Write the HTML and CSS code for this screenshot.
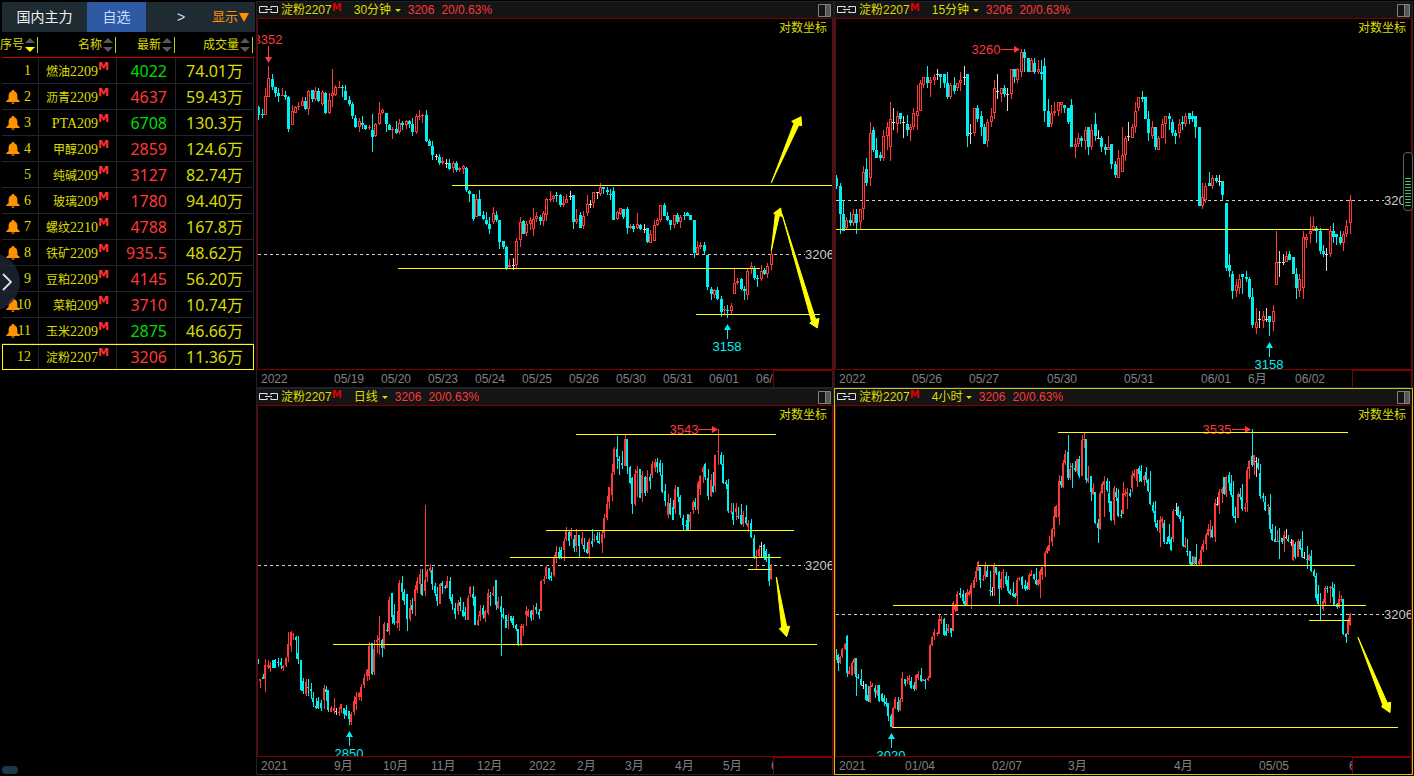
FILE: index.html
```html
<!DOCTYPE html>
<html lang="zh-CN">
<head>
<meta charset="utf-8">
<title>期货行情</title>
<link rel="stylesheet" href="styles.css">
</head>
<body>
<svg class="defs" aria-hidden="true">
  <symbol id="bell" viewBox="0 0 14 14"><path d="M7 0c.8 0 1.300.5 1.300 1.300C10.500 2 11.400 4 11.400 6v3l2.300 2v1H.300v-1l2.300-2V6c0-2 .900-4 3.100-4.700C5.700.5 6.200 0 7 0zM5.300 12.500h3.400c-.2.900-.8 1.400-1.700 1.400s-1.500-.5-1.700-1.400z" fill="#ff9200"/></symbol>
  <symbol id="sort" viewBox="0 0 13 16"><path d="M0 6h10L5 1z" fill="#585858"/><path d="M0 10h10l-5 5z" fill="#585858"/><path d="M12 0h1v16h-1z" fill="#c8c800"/></symbol>
  <symbol id="sort-down" viewBox="0 0 13 16"><path d="M0 6h10L5 1z" fill="#585858"/><path d="M0 10h10l-5 5z" fill="#ffff00"/><path d="M12 0h1v16h-1z" fill="#c8c800"/></symbol>
  <symbol id="link" viewBox="0 0 20 8"><path d="M8 .5H.5v6H8M8 0v2M8 5v2M12 .5h6.500v6H12M12 0v2M12 5v2M6 3.500h7" fill="none" stroke="#e0e0e0"/></symbol>
  <symbol id="split" viewBox="0 0 13 13"><path d="M7.500 1H12v11H7.500z" fill="#585858"/><path d="M.5.5h12v12H.5zM7.500 1v11" fill="none" stroke="#808080"/></symbol>
</svg>
<div class="app">
  <aside class="sidebar">
    <nav class="tabs">
      <button class="tab">国内主力</button>
      <button class="tab tab-active">自选</button>
      <button class="tab tab-more">&gt;</button>
      <div class="display"><select class="plain display-select" aria-label="显示"><option>显示</option></select><span class="display-caret"></span></div>
    </nav>
    <table class="quotes">
      <colgroup><col class="col-no"><col class="col-name"><col class="col-last"><col class="col-vol"></colgroup>
      <thead>
        <tr>
          <th><div class="th"><span>序号</span><svg class="sort"><use href="#sort-down"/></svg></div></th>
          <th><div class="th"><span>名称</span><svg class="sort"><use href="#sort"/></svg></div></th>
          <th><div class="th"><span>最新</span><svg class="sort"><use href="#sort"/></svg></div></th>
          <th><div class="th"><span>成交量</span><svg class="sort"><use href="#sort"/></svg></div></th>
        </tr>
      </thead>
      <tbody>
        <tr><td><div class="no"><b>1</b></div></td><td class="name">燃油<i>2209</i><sup>M</sup></td><td class="last down">4022</td><td class="vol">74.01万</td></tr>
        <tr><td><div class="no"><svg class="bell"><use href="#bell"/></svg><b>2</b></div></td><td class="name">沥青<i>2209</i><sup>M</sup></td><td class="last up">4637</td><td class="vol">59.43万</td></tr>
        <tr><td><div class="no"><svg class="bell"><use href="#bell"/></svg><b>3</b></div></td><td class="name"><i>PTA209</i><sup>M</sup></td><td class="last down">6708</td><td class="vol">130.3万</td></tr>
        <tr><td><div class="no"><svg class="bell"><use href="#bell"/></svg><b>4</b></div></td><td class="name">甲醇<i>209</i><sup>M</sup></td><td class="last up">2859</td><td class="vol">124.6万</td></tr>
        <tr><td><div class="no"><b>5</b></div></td><td class="name">纯碱<i>209</i><sup>M</sup></td><td class="last up">3127</td><td class="vol">82.74万</td></tr>
        <tr><td><div class="no"><svg class="bell"><use href="#bell"/></svg><b>6</b></div></td><td class="name">玻璃<i>209</i><sup>M</sup></td><td class="last up">1780</td><td class="vol">94.40万</td></tr>
        <tr><td><div class="no"><svg class="bell"><use href="#bell"/></svg><b>7</b></div></td><td class="name">螺纹<i>2210</i><sup>M</sup></td><td class="last up">4788</td><td class="vol">167.8万</td></tr>
        <tr><td><div class="no"><svg class="bell"><use href="#bell"/></svg><b>8</b></div></td><td class="name">铁矿<i>2209</i><sup>M</sup></td><td class="last up">935.5</td><td class="vol">48.62万</td></tr>
        <tr><td><div class="no"><b>9</b></div></td><td class="name">豆粕<i>2209</i><sup>M</sup></td><td class="last up">4145</td><td class="vol">56.20万</td></tr>
        <tr><td><div class="no"><svg class="bell"><use href="#bell"/></svg><b>10</b></div></td><td class="name">菜粕<i>209</i><sup>M</sup></td><td class="last up">3710</td><td class="vol">10.74万</td></tr>
        <tr><td><div class="no"><svg class="bell"><use href="#bell"/></svg><b>11</b></div></td><td class="name">玉米<i>2209</i><sup>M</sup></td><td class="last down">2875</td><td class="vol">46.66万</td></tr>
        <tr class="selected"><td><div class="no"><b>12</b></div></td><td class="name">淀粉<i>2207</i><sup>M</sup></td><td class="last up">3206</td><td class="vol">11.36万</td></tr>
      </tbody>
    </table>
    <button class="drawer" aria-label="展开"><svg class="drawer-icon" viewBox="0 0 10 18"><path d="M1 1l8 8-8 8" fill="none" stroke="#d8e4ee" stroke-width="1.800"/></svg></button>
    <span class="grip"></span>
  </aside>
  <main class="charts">
    <section class="panel" data-chart="m30">
      <header class="bar"><svg class="link"><use href="#link"/></svg><span class="contract">淀粉2207</span><sup class="main-mark">M</sup>
        <select class="plain period" aria-label="周期"><option>30分钟</option></select><span class="caret"></span><span class="quote">3206</span><span class="quote">20/0.63%</span><button class="split" aria-label="分栏"><svg class="split-icon"><use href="#split"/></svg></button></header>
      <svg class="plot"></svg>
      <footer class="axis"><svg class="ticks"></svg><span class="axis-box"></span></footer>
    </section>
    <section class="panel" data-chart="m15">
      <header class="bar"><svg class="link"><use href="#link"/></svg><span class="contract">淀粉2207</span><sup class="main-mark">M</sup>
        <select class="plain period" aria-label="周期"><option>15分钟</option></select><span class="caret"></span><span class="quote">3206</span><span class="quote">20/0.63%</span><button class="split" aria-label="分栏"><svg class="split-icon"><use href="#split"/></svg></button></header>
      <svg class="plot"></svg>
      <footer class="axis"><svg class="ticks"></svg><span class="axis-box"></span></footer>
    </section>
    <section class="panel" data-chart="day">
      <header class="bar"><svg class="link"><use href="#link"/></svg><span class="contract">淀粉2207</span><sup class="main-mark">M</sup>
        <select class="plain period" aria-label="周期"><option>日线</option></select><span class="caret"></span><span class="quote">3206</span><span class="quote">20/0.63%</span><button class="split" aria-label="分栏"><svg class="split-icon"><use href="#split"/></svg></button></header>
      <svg class="plot"></svg>
      <footer class="axis"><svg class="ticks"></svg><span class="axis-box"></span></footer>
    </section>
    <section class="panel panel-active" data-chart="h4">
      <header class="bar"><svg class="link"><use href="#link"/></svg><span class="contract">淀粉2207</span><sup class="main-mark">M</sup>
        <select class="plain period" aria-label="周期"><option>4小时</option></select><span class="caret"></span><span class="quote">3206</span><span class="quote">20/0.63%</span><button class="split" aria-label="分栏"><svg class="split-icon"><use href="#split"/></svg></button></header>
      <svg class="plot"></svg>
      <footer class="axis"><svg class="ticks"></svg><span class="axis-box"></span></footer>
    </section>
  </main>
  <div class="slider"><span class="slider-bars"></span></div>
</div>
<script src="charts.js"></script>
</body>
</html>
```

FILE: styles.css
```css
* { box-sizing: border-box; }

body {
  margin: 0;
  background: #000;
  color: #dcdc00;
  font: 12px/16px "Liberation Sans", "Noto Sans CJK SC", sans-serif;
}

button, .plain {
  margin: 0;
  padding: 0;
  border: 0;
  background: transparent;
  color: inherit;
  font: inherit;
}

.plain { appearance: none; outline: 0; }

.defs { position: absolute; width: 0; height: 0; }

.app {
  position: relative;
  display: flex;
  height: 100vh;
  overflow: hidden;
}

/* Watch list */
.sidebar {
  position: relative;
  flex: 0 0 256px;
  padding: 2px 1px 0 2px;
  overflow: hidden;
}

.tabs {
  display: flex;
  height: 30px;
  background: #1f2b33;
  color: #f0f0f0;
  font-size: 14px;
}

.tab { flex: 0 0 85px; }
.tab-active { flex-basis: 59px; background: #2f5aa3; color: #c4dcff; }
.tab-more { flex-basis: 66px; padding-left: 4px; color: #c4dcff; }

.display {
  display: flex;
  align-items: center;
  gap: 1px;
  color: #ff9200;
  font-size: 13px;
}

.display-select { width: 26px; }

.display-caret {
  border: 5px solid transparent;
  border-top: 9px solid #ff9200;
  border-bottom: 0;
}

.quotes {
  table-layout: fixed;
  width: 252px;
  border-spacing: 0;
}

.col-no { width: 37px; }
.col-name { width: 78px; }
.col-last { width: 59px; }
.col-vol { width: 78px; }

.quotes th {
  height: 26px;
  padding: 0;
  border-bottom: 1px solid #c80000;
  font-weight: normal;
}

.th {
  display: flex;
  align-items: center;
  justify-content: flex-end;
  gap: 1px;
  padding-right: 1px;
  white-space: nowrap;
}

.sort { flex: none; width: 13px; height: 16px; }

.quotes td {
  height: 26px;
  padding: 0;
  border-right: 1px solid #22242e;
  border-bottom: 1px solid #22242e;
  text-align: right;
  white-space: nowrap;
}

.no {
  display: grid;
  align-items: center;
  padding: 0 7px 0 4px;
}

.no b, .name i {
  font: 14px/16px "Liberation Serif", serif;
}

.no b { grid-area: 1 / 1; justify-self: end; }
.bell { grid-area: 1 / 1; width: 14px; height: 14px; }

.quotes .name { padding-right: 7px; }

.name sup {
  color: #ff3232;
  font: bold 11px/10px "DejaVu Sans", sans-serif;
  vertical-align: 6px;
}

.last, .vol { font: 16px/18px "Noto Sans", "Noto Sans CJK SC", sans-serif; }
.quotes .last { padding-right: 8px; }
.quotes .vol { padding-right: 10px; }
.up { color: #ff3838; }
.down { color: #00dc00; }

.selected { outline: 1px solid #ffff00; outline-offset: -1px; }

.drawer {
  position: absolute;
  top: 253px;
  left: -38px;
  width: 58px;
  height: 58px;
  padding-left: 40px;
  border-radius: 50%;
  background: rgba(30, 38, 52, 0.8);
}

.drawer-icon { display: block; width: 10px; height: 18px; }

.grip {
  position: absolute;
  bottom: 2px;
  left: 2px;
  width: 16px;
  height: 8px;
  border-radius: 4px;
  background: #1c3848;
}

/* Chart grid */
.charts {
  flex: 1;
  display: grid;
  grid-template-columns: 578fr 579fr;
  grid-template-rows: 1fr 1fr;
  padding: 1px 1px 1px 0;
}

.panel {
  display: flex;
  flex-direction: column;
  min-width: 0;
  min-height: 0;
  border: 1px solid #1e202b;
}

.panel-active { border-color: #c8c800; }

.bar {
  display: flex;
  flex: 0 0 16px;
  align-items: center;
  padding: 0 2px;
  background: #141414;
  white-space: nowrap;
}

.link { width: 20px; height: 8px; margin-right: 2px; }

.main-mark {
  width: 22px;
  padding-bottom: 4px;
  color: #d80000;
  font: bold 10px/10px "DejaVu Sans", sans-serif;
}

.caret {
  margin: 0 7px 0 3px;
  border: 3px solid transparent;
  border-top-color: #dcdc00;
  border-bottom: 0;
}

.quote { margin-right: 7px; color: #ff3838; }

.split { margin-left: auto; }
.split-icon { display: block; width: 13px; height: 13px; }

.plot {
  flex: 1;
  display: block;
  width: 100%;
  min-height: 0;
  border: 1px solid #800000;
  overflow: hidden;
}

.axis { display: flex; flex: 0 0 17px; }
.ticks { flex: 1; min-width: 0; height: 17px; overflow: hidden; }

.axis-box {
  flex: 0 0 60px;
  border: 1px solid #800000;
  border-bottom: 0;
}

.tick { fill: #808080; }
.scale { fill: #dcdc00; text-anchor: end; }
.price { fill: #c8c8c8; font-size: 13px; }
.high { fill: #ff3838; font-size: 13px; text-anchor: middle; }
.low { fill: #00f0f0; font-size: 13px; text-anchor: middle; }
.high-line { stroke: #ff3838; }
.low-line { stroke: #00f0f0; }
.current { stroke: #d0d0d0; stroke-dasharray: 3 3; }
.guide { stroke: #ffff00; }
.arrow { fill: #ffff00; stroke: #ffff00; stroke-width: 1px; stroke-linejoin: round; }
.r { fill: #ff3838; }
.c { fill: #00f0f0; }
.w { fill: #d8d8d8; }
.hollow { fill: #000; }

.slider {
  position: absolute;
  top: 152px;
  right: 1px;
  display: flex;
  align-items: flex-end;
  width: 10px;
  height: 59px;
  padding: 2px 1px;
  border: 1px solid #606060;
  border-radius: 4px;
  background: #000;
}

.slider-bars {
  flex: 1;
  height: 30px;
  background: repeating-linear-gradient(#3cc850 0 1px, #000 1px 3px);
}
```

FILE: charts.js
```js
// Candle rows: colour, high, body top, body bottom, low, in thirds of a pixel.
// Rows of an evenly stepped series have no x; dense series start with x.
const charts = {
  m30: {
    origin: [258, 19], size: [574, 350], hollow: true,
    series: [{ at: [256, 0], x0: 8, step: 10.052, rows: `
c318,320,345,360 c327,342,345,354 r264,288,345,345 r198,234,290,290 c222,237,261,270 c261,261,279,291 c264,279,287,306 r264,284,287,287 c273,285,291,300 c288,290,387,396
r315,332,375,375 r318,321,338,338 r306,317,320,330 r291,303,317,319 c291,303,327,330 r270,273,328,345 c270,270,297,306 r261,273,297,303 c264,273,303,306 r270,276,312,318
c276,279,339,342 r279,300,339,342 r207,279,288,321 r255,261,285,288 r243,261,263,264 c255,261,263,291 c255,273,300,300 c288,300,312,318 c306,312,348,357 c345,354,381,384
r354,363,381,396 c348,369,375,387 c375,375,387,390 r375,381,384,390 c342,390,411,456 r369,372,408,411 r306,339,372,375 r327,330,339,342 c339,339,372,396 c372,375,390,390
r381,387,390,417 c363,387,399,402 r357,369,396,402 c363,369,375,390 r360,363,375,387 c360,363,372,384 c354,372,396,408 r342,348,396,402 r330,348,352,360 r342,345,348,369
c330,345,423,426 c417,423,438,438 c423,438,465,480 w462,469,472,480 c462,471,489,495 r471,483,489,495 w477,489,492,504 c477,489,507,510 r483,489,504,519 c483,489,510,516
r501,504,510,516 r495,497,507,522 c501,504,570,576 c570,573,582,606 c582,582,657,663 r582,597,650,650 c570,597,647,648 c633,645,657,660 c636,660,672,675 c651,672,687,702
r621,639,666,672 c633,645,660,666 c660,660,726,747 c723,723,741,747 c738,741,804,810 r777,795,801,804 w774,795,798,810 r714,723,795,804 r651,666,720,741 c660,663,702,702
r663,672,699,708 r651,660,672,690 r624,657,687,708 r636,648,657,666 c645,651,663,675 r633,639,663,678 r594,597,645,663 r573,597,599,606 r585,588,597,606 c576,585,588,606
c582,585,615,620 r588,609,615,621 r582,597,608,609 w573,588,590,600 c585,585,666,687 r627,657,666,672 c636,645,684,684 r633,647,678,687 r585,612,638,648 w600,612,615,624
r576,577,609,624 w576,577,579,597 r549,561,582,588 c561,561,567,582 c561,570,576,585 c567,582,585,600 c561,573,660,660 r633,636,657,660 r624,625,641,645 c627,627,651,657
c621,627,684,702 r672,678,684,687 c672,678,687,696 r639,672,684,687 c672,675,686,690 w672,687,690,699 c684,684,726,729 r690,702,728,729 r660,675,723,723 r654,660,675,678
r615,615,660,666 c609,615,648,648 c636,648,660,663 c660,660,675,690 r645,645,675,684 c639,645,666,672 r645,651,666,684 c636,645,648,660 c636,639,648,648 c645,645,660,660
c660,660,759,774 r723,741,762,762 r726,735,741,747 c726,735,753,762 c765,765,861,870 c861,867,882,900 r867,870,885,894 c861,870,897,900 c888,897,936,951 r918,927,930,945
c915,930,933,954 r909,918,933,945 r807,849,882,882 r834,843,849,855 c834,837,867,870 c858,867,873,900 r807,813,885,900 r786,798,807,822 c798,804,834,840 c825,834,837,861
r795,813,837,843 c804,810,822,825 r789,798,822,834 r753,762,795,810` }],
    guides: [[452, 832, 185], [398, 760, 268], [696, 820, 314]],
    current: [254, 805],
    high: { text: "3352", x: 268, y: 44, line: [268, 46, 268, 58], head: [265, 57, 272, 57, 268.5, 63] },
    low: { text: "3158", x: 727, y: 351, arrow: [727, 324] },
    arrows: [
      [[540, 0], [694, 548, 762, 370, 755, 364, 783, 350, 785, 377, 776, 376]],
      [[540, 190], [694, 182, 706, 73, 701, 70, 722, 54, 726, 79, 718, 77]],
      [[540, 190], [726, 72, 815, 396, 809, 399, 832, 414, 837, 385, 827, 388]]
    ],
    ticks: [[261, "2022"], [334, "05/19"], [381, "05/20"], [428, "05/23"], [475, "05/24"], [522, "05/25"], [569, "05/26"], [616, "05/30"], [663, "05/31"], [709, "06/01"], [756, "06/02"]]
  },
  m15: {
    origin: [836, 19], size: [575, 350], hollow: true,
    series: [{ at: [834, 0], x0: 8, step: 10.072, rows: `
c525,534,558,567 c549,558,642,702 c600,642,693,693 r651,660,684,690 c636,660,669,678 r627,642,669,678 c627,642,669,702 r627,628,667,690 r498,516,627,660 c474,507,549,558
r366,399,534,558 c381,390,450,456 c414,450,474,474 c456,465,474,483 r390,408,474,483 r366,381,408,450 r306,357,441,483 w324,366,368,390 r333,348,372,399 c339,339,357,372
w348,366,369,414 c345,372,390,408 r372,381,390,423 r324,339,381,390 r255,333,348,390 r240,249,333,333 r231,231,255,264 c198,231,249,264 r231,240,249,291 r222,231,239,255
w207,222,225,240 c222,222,231,264 c222,222,249,264 c216,249,291,297 r249,255,291,297 c231,255,273,282 r249,249,264,273 r216,240,249,273 w198,231,234,255 c222,222,408,441
w372,399,402,432 r324,324,400,408 c315,324,357,366 c333,348,381,408 c372,381,432,432 r357,366,423,441 r324,348,366,381 r240,264,340,357 w222,273,276,297 r264,265,282,306
c255,264,282,291 w264,282,285,333 r207,207,282,297 c207,207,231,249 r204,207,240,249 r147,156,216,231 c147,156,174,216 c174,174,216,216 r174,180,216,216 c174,189,216,222
r180,207,216,222 c180,216,222,240 c174,198,333,366 c297,333,381,381 r315,339,372,381 r306,333,339,348 r306,306,333,348 r306,307,315,339 c315,315,324,339 c324,324,366,372
c297,315,441,441 r414,432,441,474 r399,414,432,441 c408,414,423,441 r381,390,423,450 c381,381,441,465 r372,390,441,450 c339,372,408,423 w390,414,417,417 c408,414,441,456
c432,441,450,465 r408,441,450,450 c432,432,492,507 c483,492,525,534 r450,474,534,534 r381,465,516,516 r408,414,465,483 w366,408,411,423 r372,381,414,414 r306,333,381,399
r291,291,324,333 c273,291,297,306 c291,291,357,357 c333,357,399,423 r363,381,408,417 c381,381,441,450 r408,414,450,450 r357,372,414,414 r348,348,372,432 c339,348,357,390
c357,366,399,408 c390,399,408,432 r357,372,399,414 c348,366,372,390 r339,348,372,381 c339,339,357,372 c333,348,357,366 c348,348,381,414 c381,381,618,618 r549,591,618,627
r549,558,600,609 c516,549,558,558 r525,534,558,567 c525,534,543,549 w525,543,546,558 c543,543,585,600 c609,609,804,813 c762,795,813,831 c813,822,873,897 r837,855,873,891
r822,837,864,882 c822,822,831,882 c813,831,837,846 c831,837,891,897 c864,891,975,984 r924,966,984,1002 w933,957,960,984 r933,948,963,984 w924,957,960,966 c948,948,966,1008
r915,933,966,993 r693,786,855,855 w753,786,789,831 w762,786,789,795 r753,768,786,786 c753,762,780,780 c771,771,822,822 c804,822,864,897 r822,837,873,891 r693,711,864,897
r702,711,720,744 r651,693,702,729 r651,678,693,693 c678,684,693,729 c684,693,753,762 c735,753,762,771 w744,762,765,813 r678,693,762,771 c669,693,711,729 c702,702,711,735
c693,711,729,735 r693,702,729,753 r660,678,702,711 r585,600,669,702` }],
    guides: [[836, 1329, 229]],
    current: [200, 1384],
    high: { text: "3260", x: 986, y: 54, line: [1001, 49, 1015, 49], head: [1014, 46, 1014, 53, 1020, 49.5] },
    low: { text: "3158", x: 1269, y: 369, arrow: [1269, 342] },
    arrows: [],
    ticks: [[839, "2022"], [912, "05/26"], [969, "05/27"], [1047, "05/30"], [1124, "05/31"], [1201, "06/01"], [1248, "6月"], [1295, "06/02"]]
  },
  day: {
    origin: [258, 406], size: [574, 350],
    series: [{ at: [256, 386], rows: `
7c819,819,833,833 13r879,879,884,906 21c864,873,879,879 28r819,836,879,918 37r822,836,842,850 43r828,838,845,858 52c822,822,846,846 58c819,822,846,846 67c816,827,832,844 75c816,828,838,849
82r836,840,846,855 90r813,816,837,843 97r738,774,813,828 105r735,738,780,798 112r741,743,746,762 120c750,753,762,819 127c750,801,819,834 135c822,822,912,915 142c876,885,915,924 150r879,888,924,930
157c879,903,906,930 165c891,909,915,939 172c918,936,948,963 180c936,960,966,969 187c933,945,966,969 195c942,950,966,975 204r897,906,942,969 211c900,909,918,945 218c912,912,972,978 226r960,966,978,978
235r936,966,975,984 241w966,975,978,987 250r963,978,981,990 256r954,954,970,981 265c966,966,984,999 271c957,972,987,990 279c975,975,1000,1017 286r978,984,1008,1017 294r930,945,978,987 300r918,933,954,972
309r918,921,933,942 315r894,903,933,945 324r864,876,897,906 333r849,852,870,885 340r768,780,870,882 348c771,771,864,867 355r762,789,858,867 363r747,762,768,801 370r690,756,762,807 379c759,762,786,813
385r708,714,786,789 393c711,732,735,738 400r633,642,735,747 408c621,621,693,714 415c654,687,711,717 424r675,705,711,726 430r582,591,711,735 438c570,591,618,642 444c609,618,645,657 453c624,624,699,735
462r642,666,699,705 468c636,657,672,684 477r597,609,645,690 483r573,585,612,621 492r549,564,594,624 499c549,594,627,630 508r357,582,615,630 514r549,555,573,588 523r534,546,555,561 529c543,552,594,612
537c591,600,621,630 543c603,624,645,660 552r591,594,654,654 559c585,591,600,624 568c597,603,606,609 574r570,585,606,606 582c573,585,639,645 590c624,633,654,672 598c651,666,684,699 606r642,651,675,687
612c633,648,660,675 621c648,672,690,693 628c663,678,690,702 636r627,636,702,702 643r600,603,624,633 652c600,624,636,660 657c630,633,717,717 667r687,702,717,720 673r657,675,690,705 681c657,666,687,699
688r672,675,696,708 696r609,621,681,687 703c618,630,633,660 711r600,621,627,630 720c582,582,657,672 727r633,645,666,669 736c630,660,678,810 742c666,684,693,699 751c687,687,726,726 757r684,702,705,729
766c690,690,705,711 772c690,696,717,726 781c714,717,729,735 787c729,729,775,780 795r714,720,775,780 802r714,720,726,750 811r660,675,687,720 817r669,675,690,693 826c672,675,696,705 832r657,672,687,702
841c651,663,672,684 850c669,678,687,699 856r582,585,675,675` }, { at: [540, 386], rows: `
12r570,579,585,594 19r537,543,570,579 27c546,546,579,582 34c558,570,576,585 43r507,516,567,573 50r480,498,516,531 58c483,498,516,519 65c483,492,516,519 73r456,465,492,525 79r423,432,459,465
88c435,438,465,480 94r426,438,450,459 102c447,459,486,498 109r429,447,480,498 117c447,447,480,516 127r438,456,474,480 133c456,477,489,498 141c468,489,501,504 149r456,462,501,519 157c429,465,474,483
163r444,459,462,468 172c438,450,462,471 178c438,465,471,474 187r435,444,471,501 192r384,396,441,456 201r330,354,396,402 207r303,303,348,369 216r234,261,326,345 222r183,189,258,267 231c150,189,213,249
238c210,219,225,267 247c195,231,237,249 255r147,159,240,240 261c159,159,240,264 270c240,243,291,294 277c273,276,354,384 286r249,264,354,360 292r240,255,261,333 300c249,249,336,336 307r255,267,321,348
315c270,273,321,330 321r252,273,315,321 331c264,273,285,309 337r225,234,267,276 346r219,228,246,258 351c216,228,243,261 360c222,231,258,270 366c231,267,318,321 375c294,315,345,360 385r324,348,387,396
390c336,351,384,387 399c342,363,402,402 406r297,309,369,384 414c303,303,333,348 420c327,333,387,396 430c387,396,417,432 438c402,417,420,432 445c384,384,432,432 451r378,387,408,432 460r342,348,372,384
466c336,348,363,372 475r285,291,371,384 481r267,270,309,327 489r240,246,258,291 495c231,234,273,282 504c249,276,330,342 513r264,282,330,333 520c258,300,318,321 527r207,207,300,318 535r129,195,198,237
543c198,207,234,237 550c207,234,291,294 558c282,288,294,309 565c279,294,375,381 574r351,375,378,384 580c351,378,402,417 589r351,366,378,402 595c363,390,393,399 603c354,387,414,417 610r375,387,414,423
619c357,393,411,417 625r402,411,423,438 633c399,411,453,456 642c447,456,513,519 649r492,510,516,549 657r477,489,510,516 664w468,480,483,513 672c474,477,513,522 679c489,495,522,528 687c504,504,585,600
694r534,540,579,582` }],
    guides: [[576, 776, 434], [546, 794, 530], [510, 781, 557], [748, 771, 569], [333, 817, 644]],
    current: [565, 805],
    high: { text: "3543", x: 684, y: 434, line: [698, 429, 713, 429], head: [712, 426, 712, 433, 718, 429.5] },
    low: { text: "2850", x: 349, y: 758, arrow: [349, 731] },
    arrows: [[[540, 386], [709, 573, 725, 724, 718, 728, 740, 752, 749, 721, 740, 721]]],
    ticks: [[261, "2021"], [334, "9月"], [383, "10月"], [431, "11月"], [477, "12月"], [529, "2022"], [577, "2月"], [625, "3月"], [675, "4月"], [723, "5月"], [771, "6月"]]
  },
  h4: {
    origin: [836, 406], size: [575, 350],
    series: [{ at: [834, 386], rows: `
7c789,804,822,822 13c804,807,831,855 19r810,813,831,834 26r786,789,810,816 33r771,774,789,792 40c747,750,861,873 46r840,855,864,864 54r825,831,866,870 60r816,819,831,864 67c816,816,873,930
73c864,873,876,879 82c849,879,897,900 88w885,897,900,909 96c894,894,942,945 102c900,927,945,948 108r885,900,948,951 115r891,897,903,903 123c897,906,918,936 130r897,912,924,930 136c897,897,945,948
145c921,924,945,948 151c927,936,948,960 157c936,948,954,963 162c951,951,990,1005 171c984,990,1023,1023 177r963,966,1023,1023 184r933,939,966,969 193c933,948,972,978 199r936,942,972,975 205r858,876,939,948
214c879,879,894,900 220r870,882,885,894 226r867,876,882,897 232c873,885,906,909 241c888,897,909,915 247r864,867,909,912 253r855,864,876,882 262c846,867,885,888 268r879,879,885,885 274c879,882,885,909
282r870,876,882,885 289r774,777,876,876 295r750,753,777,780 301r729,738,750,762 309r738,741,744,750 315r687,699,744,744 322r690,699,705,714 331c696,699,747,750 337c714,735,747,750 343r714,726,735,741
351c726,726,741,753 357r645,651,735,735 364r654,657,672,678 370r615,624,675,675 379c606,621,627,636 388c612,624,645,654 393c621,645,657,657 400r609,618,657,657 406r612,618,627,630 412r591,597,624,669
421r573,582,606,606 427r543,555,576,588 432r525,528,555,555 438c543,543,582,606 447r567,579,582,585 454r528,540,570,579 460c540,555,573,573 469c555,612,615,630 475w603,615,618,630 481r531,540,606,630
486c543,543,561,567 495c555,558,609,654 502r558,579,606,612 508r549,558,561,606 516c558,570,594,600 523c570,582,615,621 529c609,615,624,627 538c588,621,630,633 544c621,624,633,636 550r576,582,630,657
556r573,576,579,585 565c570,573,597,609 573c582,597,609,615 579c588,600,609,612 586r561,567,609,612 592r552,564,570,570 600c564,564,579,582 607c546,582,594,597 613r579,582,597,600 619r549,555,594,636
625r543,543,567,582 633r495,501,543,573 640r480,486,501,504 646r450,477,495,495 655r426,429,468,480 661r363,390,429,453 667r357,360,393,396 675r267,285,393,417 682c270,285,297,306 688r222,231,303,306
694r192,204,231,237 702c147,198,276,282 709r231,249,276,282 715c231,240,243,306 724c225,246,252,258 730r219,219,255,264 736c210,219,270,276 745r147,162,270,270 751r141,159,162,186 756c159,159,282,291
763r240,276,285,291 771c270,270,318,345 778r291,306,324,327 783c318,318,411,414 792c399,411,426,471 799r315,321,429,432 805r288,294,321,324 811r270,285,297,393 820c276,285,312,318 826c285,321,351,378
832c345,345,402,405 841r300,306,402,417 846c306,318,333,345 853c309,336,390,393` }, { at: [1120, 386], rows: `
3c372,387,390,396 10r288,321,384,384 16r309,321,327,333 22r306,318,324,369 30c309,321,330,333 37r255,267,306,318 43r249,261,270,276 52r249,249,285,303 58c240,246,264,288 64c237,255,285,288
73r267,270,282,300 79c243,258,282,291 84c279,282,315,318 91c255,318,354,357 99c348,357,375,381 106c345,375,408,423 112c402,411,426,435 121r390,402,441,483 127r393,399,408,426 133c402,411,468,474
141c453,468,474,474 148c414,450,468,474 154c453,459,492,495 160r369,375,459,468 169w351,372,375,387 174c360,363,390,393 181c375,387,399,408 190c390,399,480,483 196r453,477,483,486 202c459,495,498,510
211c495,495,534,537 217c510,528,537,537 223r510,513,534,537 229c474,513,534,537 237r519,525,534,537 243r480,492,531,537 250r462,474,492,498 259r441,447,474,492 265r414,429,447,450 271r402,429,435,456
277c420,432,453,456 285r339,351,453,468 292w333,354,357,360 298r309,318,357,384 307r303,309,321,351 313c273,273,324,327 319r270,273,324,333 328c258,267,291,315 334c267,291,327,333 339c285,327,390,396
346c363,390,396,411 354r318,324,396,396 361c306,324,333,342 367c294,333,369,375 376r351,363,369,378 382r243,252,351,378 388r222,225,249,279 397c129,210,237,243 403r207,207,237,267 409w213,225,228,273
415c216,231,246,252 422c234,261,330,339 430c321,330,336,348 436c330,348,372,375 445r354,357,360,387 451c324,363,429,441 457c414,429,462,465 466c420,459,468,468 472r432,465,468,468 478c426,465,468,519
487c456,456,468,474 493r435,447,465,498 499w429,453,456,459 505c447,459,465,468 514w459,468,471,480 520r462,462,522,525 526c468,474,513,519 535r459,465,513,513 541c459,465,489,492 547c435,486,513,516
553w498,513,516,519 562c480,519,522,549 568r504,507,522,525 573c492,510,555,558 583c549,555,570,573 589c561,570,636,645 595c597,624,654,657 601c621,657,660,702 610r639,645,669,675 616r600,606,651,657
622c600,606,609,621 631r600,603,606,651 637c588,603,606,633 643c594,606,657,657 652c651,654,663,669 658r615,639,663,666 664r627,639,642,648 669c639,639,744,747 678c741,744,753,771 685r696,705,744,747
691r681,684,717,720` }],
    guides: [[1058, 1348, 432], [978, 1355, 565], [893, 1366, 605], [1309, 1350, 620], [892, 1398, 727]],
    current: [614, 1384],
    high: { text: "3535", x: 1217, y: 434, line: [1232, 429, 1246, 429], head: [1245, 426, 1245, 433, 1251, 429.5] },
    low: { text: "3020", x: 891, y: 760, arrow: [891, 733] },
    arrows: [[[1120, 386], [714, 754, 788, 956, 785, 962, 810, 980, 812, 949, 802, 951]]],
    ticks: [[839, "2021"], [905, "01/04"], [992, "02/07"], [1068, "3月"], [1174, "4月"], [1259, "05/05"], [1349, "6月"]]
  }
};

function draw(panel) {
  const chart = charts[panel.dataset.chart];
  const plot = panel.querySelector(".plot");
  const ticks = panel.querySelector(".ticks");
  const [ox, oy] = chart.origin;
  const sx = Math.round(plot.clientWidth) / chart.size[0];
  const sy = Math.round(plot.clientHeight) / chart.size[1];
  const px = x => Math.floor((x - ox) * sx + 0.01);
  const py = y => Math.round((y - oy) * sy);
  const rect = (x, y, w, h, cls) => `<rect x="${x}" y="${y}" width="${w}" height="${h}" class="${cls}"/>`;
  const line = (x1, y1, x2, y2, cls) =>
    `<line x1="${px(x1) + (x1 === x2 ? 0.5 : 0)}" y1="${py(y1) + (y1 === y2 ? 0.5 : 0)}" x2="${px(x2) + (x1 === x2 ? 0.5 : 0)}" y2="${py(y2) + (y1 === y2 ? 0.5 : 0)}" class="${cls}"/>`;
  const poly = (pts, cls) => {
    const out = [];
    for (let i = 0; i < pts.length; i += 2) out.push(`${(pts[i] - ox) * sx},${(pts[i + 1] - oy) * sy}`);
    return `<polygon points="${out.join(" ")}" class="${cls}"/>`;
  };
  const text = (x, y, s, cls) => `<text x="${px(x)}" y="${py(y)}" class="${cls}">${s}</text>`;

  const out = [line(ox, chart.current[0], chart.current[1], chart.current[0], "current")];

  for (const s of chart.series) {
    s.rows.trim().split(/\s+/).forEach((row, i) => {
      const [, x, cls, rest] = row.match(/^(\d*)([rcw])(.*)$/);
      const [h, t, b, l] = rest.split(",").map(v => py(s.at[1] + v / 3));
      const cx = px(s.at[0] + (x ? +x : s.x0 + i * s.step) / 3);
      const body = Math.max(1, b - t);
      out.push(rect(cx, h, 1, Math.max(1, l - h), cls));
      if (cls === "w") {
        out.push(rect(cx - 1, t, chart.hollow ? 3 : 2, 1, cls));
      } else if (chart.hollow) {
        out.push(rect(cx - 1, t, 3, body, cls));
        if (cls === "r" && body > 2) out.push(rect(cx, t + 1, 1, body - 2, "hollow"));
      } else {
        out.push(rect(cx - 1, t, 2, body, cls));
      }
    });
  }

  const { high, low } = chart;
  out.push(text(high.x, high.y, high.text, "high"), line(...high.line, "high-line"), poly(high.head, "r"));
  const [ax, ay] = low.arrow;
  out.push(text(low.x, low.y, low.text, "low"), line(ax, ay + 5, ax, ay + 15, "low-line"),
    poly([ax - 3, ay + 6, ax + 4, ay + 6, ax + 0.5, ay], "c"));
  for (const [x1, x2, y] of chart.guides) out.push(line(x1, y, x2, y, "guide"));
  for (const [[bx, by], pts] of chart.arrows) {
    out.push(poly(pts.map((v, i) => (i % 2 ? by : bx) + v / 3), "arrow"));
  }
  out.push(text(chart.current[1], chart.current[0] + 5, "3206", "price"));
  out.push(`<text x="${plot.clientWidth - 5}" y="13" class="scale">对数坐标</text>`);
  plot.innerHTML = out.join("");

  ticks.innerHTML = chart.ticks
    .map(([x, s]) => `<text x="${px(x) + 1}" y="13" class="tick">${s}</text>`).join("");
}

function drawAll() {
  document.querySelectorAll(".panel").forEach(draw);
}

drawAll();
window.addEventListener("resize", drawAll);
```
